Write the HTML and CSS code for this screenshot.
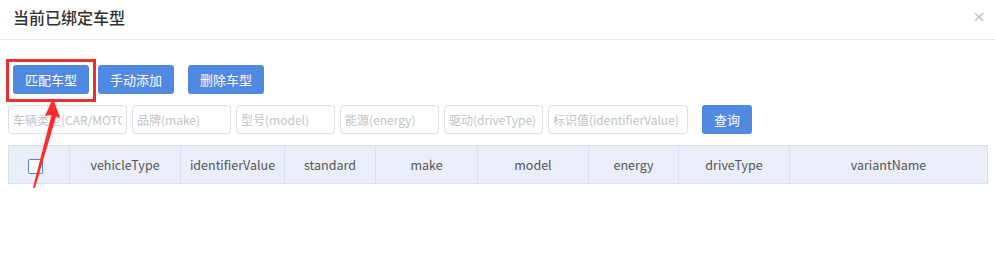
FILE: index.html
```html
<!DOCTYPE html>
<html lang="zh-CN">
<head>
    <meta charset="UTF-8">
    <title>当前已绑定车型</title>
    <link rel="stylesheet" href="styles.css">
</head>
<body>

<div class="dialog">
    <div class="dialog-header">
        <h3>当前已绑定车型</h3>
        <svg class="close" width="10" height="10" viewBox="0 0 10 10">
            <path d="M1 1 L9 9 M9 1 L1 9" stroke="#c4c4c4" stroke-width="1.6"/>
        </svg>
    </div>

    <div class="dialog-body">
        <!-- 操作按钮 -->
        <div class="toolbar">
            <span class="mark-box"><button class="btn">匹配车型</button></span>
            <button class="btn add">手动添加</button>
            <button class="btn del">删除车型</button>
        </div>

        <!-- 查询条件 -->
        <div class="filters">
            <input class="w-type" type="text" placeholder="车辆类型(CAR/MOTO)">
            <input class="w-sm" type="text" placeholder="品牌(make)">
            <input class="w-sm" type="text" placeholder="型号(model)">
            <input class="w-sm" type="text" placeholder="能源(energy)">
            <input class="w-sm" type="text" placeholder="驱动(driveType)">
            <input class="w-id" type="text" placeholder="标识值(identifierValue)">
            <button class="btn query">查询</button>
        </div>

        <table class="grid">
            <tr>
                <th class="c-check"><span class="checkbox"></span></th>
                <th class="c1">vehicleType</th>
                <th class="c2">identifierValue</th>
                <th class="c3">standard</th>
                <th class="c4">make</th>
                <th class="c5">model</th>
                <th class="c6">energy</th>
                <th class="c7">driveType</th>
                <th>variantName</th>
            </tr>
        </table>
    </div>

    <!-- 标注箭头 -->
    <svg class="arrow" width="40" height="100" viewBox="0 0 40 100">
        <polygon points="30,2 37,22 33,20.5 12,92 10,91.5 28.5,19 22,20" fill="#ff2b2b"/>
    </svg>
</div>

</body>
</html>
```

FILE: styles.css
```css
body {
    margin: 0;
    padding: 0;
    background-color: #fff;
    font-family: "Noto Sans CJK SC", sans-serif;
    color: #333;
}
.dialog {
    position: relative;
    width: 995px;
    height: 255px;
}
.dialog-header {
    display: flex;
    justify-content: space-between;
    align-items: center;
    height: 39px;
    padding: 0 11px 0 13px;
    border-bottom: 1px solid #e8e8e8;
}
.dialog-header h3 {
    margin: -6px 0 0 0;
    font-size: 16px;
    font-weight: 500;
    color: #303133;
}
.close {
    margin-top: -6px;
}
.dialog-body {
    padding: 19px 8px 0 8px;
}
.toolbar {
    display: flex;
    align-items: flex-start;
    margin-left: -2px;
    margin-bottom: 3px;
}
.mark-box {
    display: inline-flex;
    padding: 3px 4px 5px 4px;
    border: 3px solid #ea2f2f;
}
.btn {
    height: 29px;
    width: 76px;
    padding: 0;
    border: none;
    border-radius: 3px;
    background-color: #5088e2;
    color: #fff;
    font-family: "Noto Sans CJK SC", sans-serif;
    font-size: 13px;
    cursor: pointer;
}
.toolbar .add {
    margin: 6px 0 0 2px;
}
.toolbar .del {
    margin: 6px 0 0 14px;
}
.filters {
    display: flex;
    align-items: center;
    margin-bottom: 11px;
}
.filters input {
    box-sizing: border-box;
    height: 29px;
    margin-right: 5px;
    padding: 0 4px;
    border: 1px solid #dcdfe6;
    border-radius: 4px;
    font-family: "Noto Sans CJK SC", sans-serif;
    font-size: 12px;
    color: #606266;
}
.filters input::placeholder {
    color: #bfc2c8;
}
.w-type {
    width: 119px;
}
.w-sm {
    width: 99px;
}
.w-id {
    width: 140px;
}
.filters .query {
    width: 50px;
    margin-left: 9px;
}
.grid {
    width: 980px;
    border-collapse: collapse;
    table-layout: fixed;
}
.grid th {
    height: 37px;
    padding: 0;
    background-color: #e9eef9;
    border: 1px solid #d9dfec;
    font-size: 12.5px;
    font-weight: 400;
    color: #555;
    text-align: center;
}
.c-check { width: 60px; }
.c1 { width: 110px; }
.c2 { width: 103px; }
.c3 { width: 90px; }
.c4 { width: 101px; }
.c5 { width: 110px; }
.c6 { width: 89px; }
.c7 { width: 110px; }
.checkbox {
    display: inline-block;
    width: 13px;
    height: 13px;
    margin-left: -8px;
    border: 1px solid #4f86e0;
    border-radius: 2px;
    background-color: #fff;
    vertical-align: middle;
}
.arrow {
    position: absolute;
    left: 23px;
    top: 96px;
}
```
